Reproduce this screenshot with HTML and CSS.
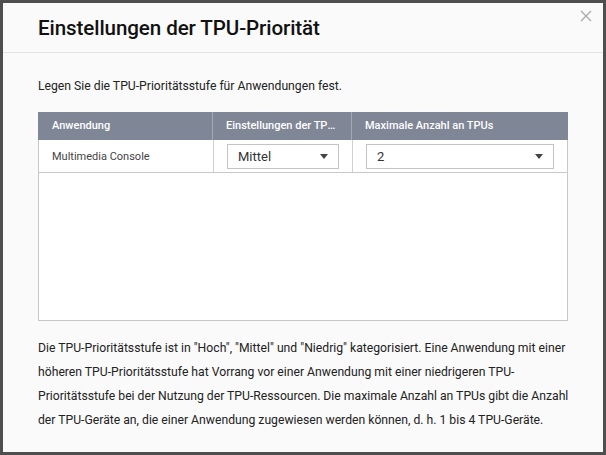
FILE: index.html
```html
<!DOCTYPE html>
<html lang="de">

<head>
  <meta charset="UTF-8" />
  <title>Einstellungen der TPU-Priorität</title>
  <meta name="viewport" content="width=device-width, initial-scale=1.0" />
  <link rel="stylesheet" href="styles.css">
</head>

<body>
  <div class="modal">
    <div class="modal-header">
      <h2>Einstellungen der TPU-Priorität</h2>
      <a class="close" title="Schließen">
        <svg width="12" height="12" viewBox="0 0 12 12">
          <path d="M1 1 L11 11 M11 1 L1 11" stroke="#a8a8a8" stroke-width="1.2" fill="none" />
        </svg>
      </a>
    </div>

    <div class="modal-body">
      <p class="intro">Legen Sie die TPU-Prioritätsstufe für Anwendungen fest.</p>

      <div class="grid">
        <div class="grid-head">
          <div class="cell">Anwendung</div>
          <div class="cell">Einstellungen der TPU-Priorität</div>
          <div class="cell">Maximale Anzahl an TPUs</div>
        </div>
        <div class="grid-row">
          <div class="cell">Multimedia Console</div>
          <div class="cell">
            <div class="select"><span>Mittel</span><i class="caret"></i></div>
          </div>
          <div class="cell">
            <div class="select"><span>2</span><i class="caret"></i></div>
          </div>
        </div>
      </div>

      <p class="note">Die TPU-Prioritätsstufe ist in "Hoch", "Mittel" und "Niedrig" kategorisiert. Eine Anwendung mit einer höheren TPU-Prioritätsstufe hat Vorrang vor einer Anwendung mit einer niedrigeren TPU-Prioritätsstufe bei der Nutzung der TPU-Ressourcen. Die maximale Anzahl an TPUs gibt die Anzahl der TPU-Geräte an, die einer Anwendung zugewiesen werden können, d. h. 1 bis 4 TPU-Geräte.</p>
    </div>
  </div>
</body>

</html>
```

FILE: styles.css
```css
body {
  margin: 0;
  background: #4e4e4e;
  font-family: Roboto, 'Liberation Sans', sans-serif;
  height: 455px;
  overflow: hidden;
}

.modal {
  position: relative;
  margin: 3px 0 0 3px;
  width: 600px;
  height: 449px;
  background: #fafafa;
  box-sizing: border-box;
}

.modal-header {
  height: 49px;
  border-bottom: 1px solid #e4e4e4;
  display: flex;
  align-items: center;
  padding-left: 35px;
}

.modal-header h2 {
  margin: 0;
  font-size: 20.6px;
  font-weight: 500;
  color: #111;
  letter-spacing: -0.1px;
}

.close {
  position: absolute;
  top: 7px;
  right: 11px;
  display: block;
  line-height: 0;
  cursor: pointer;
}

.modal-body {
  padding: 24px 35px 0;
}

.intro {
  margin: 0 0 17px;
  font-size: 12.2px;
  line-height: 18px;
  color: #222;
}

.grid {
  width: 530px;
  height: 209px;
  border: 1px solid #c8c8c8;
  border-top: none;
  box-sizing: border-box;
  background: #fff;
}

.grid-head,
.grid-row {
  display: grid;
  grid-template-columns: 174px 139px 1fr;
}

.grid-head {
  height: 28px;
  background: #7f8696;
  color: #fff;
  font-size: 11px;
  font-weight: 500;
  margin: 0 -1px;
}

.grid-head .cell {
  display: block;
  line-height: 28px;
  padding: 0 14px 0 13px;
  border-left: 1px solid #a3a8b4;
  white-space: nowrap;
  overflow: hidden;
  text-overflow: ellipsis;
  min-width: 0;
}

.grid-head .cell:first-child {
  border-left: none;
  padding-left: 14px;
}

.grid-row {
  height: 32px;
  border-bottom: 1px solid #c8c8c8;
  font-size: 11px;
  color: #444;
}

.grid-row .cell {
  display: flex;
  align-items: center;
  padding: 0 13px 0 13px;
  border-left: 1px solid #d0d0d0;
}

.grid-row .cell:first-child {
  border-left: none;
}

.select {
  flex: 1;
  height: 25px;
  box-sizing: border-box;
  border: 1px solid #c4c4c4;
  background: #fff;
  display: flex;
  align-items: center;
  justify-content: space-between;
  padding: 0 10px 0 10px;
  font-size: 13px;
  color: #333;
}

.caret {
  width: 0;
  height: 0;
  border-left: 4.5px solid transparent;
  border-right: 4.5px solid transparent;
  border-top: 5px solid #444;
}

.note {
  margin: 15px -12px 0 0;
  font-size: 12.2px;
  line-height: 24px;
  color: #222;
}
```
